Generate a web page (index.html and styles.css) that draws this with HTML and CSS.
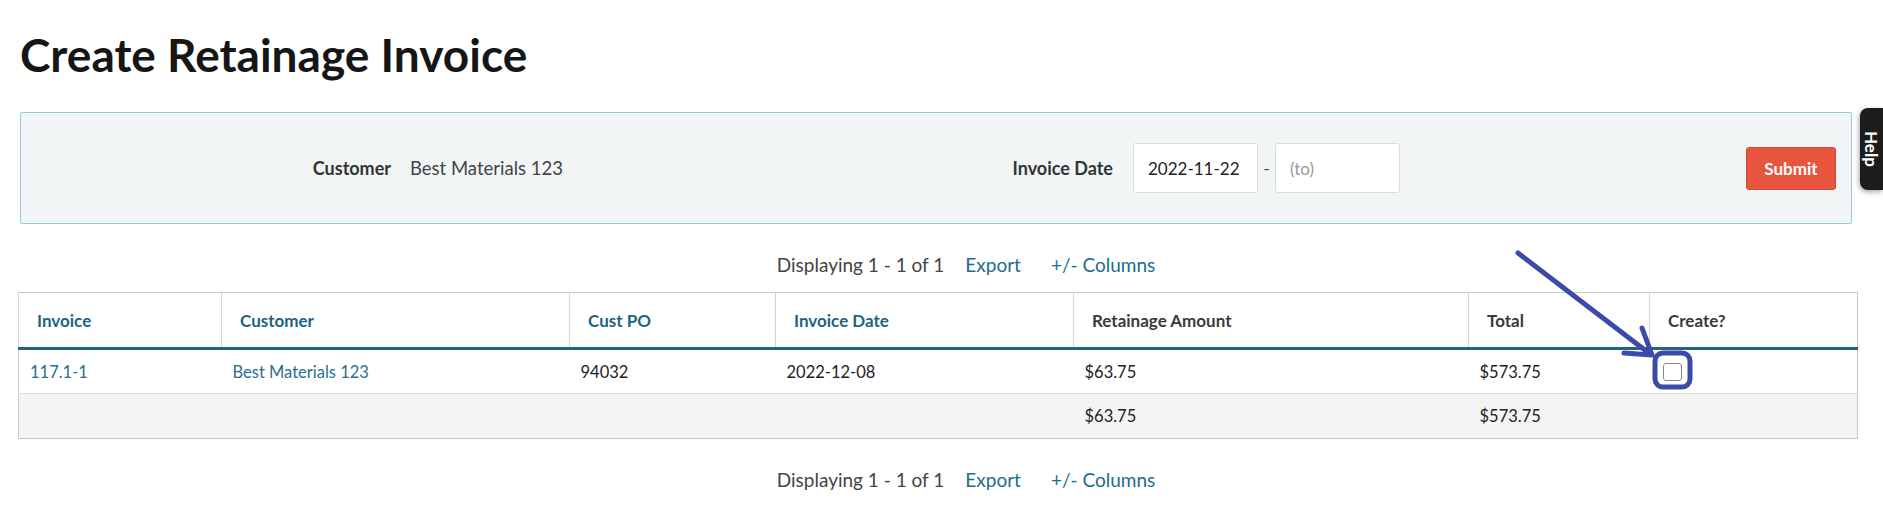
FILE: index.html
```html
<!DOCTYPE html>
<html lang="en">
<head>
    <meta charset="UTF-8">
    <meta name="viewport" content="width=device-width, initial-scale=1.0">
    <title>Create Retainage Invoice</title>
    <link rel="stylesheet" href="styles.css">
</head>
<body>
    <div class="page">
        <h1>Create Retainage Invoice</h1>

        <form class="filter">
            <label class="filter-label">Customer</label>
            <span class="filter-value">Best Materials 123</span>
            <label class="filter-label" for="dateFrom">Invoice Date</label>
            <div class="date-range">
                <input type="text" id="dateFrom" value="2022-11-22">
                <span class="dash">-</span>
                <input type="text" id="dateTo" placeholder="(to)">
            </div>
            <span></span>
            <button type="submit">Submit</button>
        </form>

        <div class="pager">
            <span>Displaying 1 - 1 of 1</span>
            <a href="#">Export</a>
            <a href="#">+/- Columns</a>
        </div>

        <table class="grid">
            <thead>
                <tr>
                    <th class="c-invoice"><a href="#">Invoice</a></th>
                    <th class="c-customer"><a href="#">Customer</a></th>
                    <th class="c-po"><a href="#">Cust PO</a></th>
                    <th class="c-date"><a href="#">Invoice Date</a></th>
                    <th class="c-ret">Retainage Amount</th>
                    <th class="c-total">Total</th>
                    <th class="c-create">Create?</th>
                </tr>
            </thead>
            <tbody>
                <tr>
                    <td><a href="#">117.1-1</a></td>
                    <td><a href="#">Best Materials 123</a></td>
                    <td>94032</td>
                    <td>2022-12-08</td>
                    <td>$63.75</td>
                    <td>$573.75</td>
                    <td><input type="checkbox" class="check"></td>
                </tr>
                <tr class="totals">
                    <td></td>
                    <td></td>
                    <td></td>
                    <td></td>
                    <td>$63.75</td>
                    <td>$573.75</td>
                    <td></td>
                </tr>
            </tbody>
        </table>

        <div class="pager pager-bottom">
            <span>Displaying 1 - 1 of 1</span>
            <a href="#">Export</a>
            <a href="#">+/- Columns</a>
        </div>
    </div>

    <div class="help-tab">Help</div>

    <!-- annotation drawn over the screenshot -->
    <svg class="annotation" width="1883" height="516" viewBox="0 0 1883 516">
        <g fill="none" stroke="#3c4aa8" stroke-width="5" stroke-linecap="round" stroke-linejoin="round">
            <line x1="1518" y1="253" x2="1650" y2="354"/>
            <polyline points="1642,328 1652,355 1624,353"/>
            <rect x="1655" y="353" width="35" height="34" rx="8"/>
        </g>
    </svg>
</body>
</html>
```

FILE: styles.css
```css
* {
    box-sizing: border-box;
    margin: 0;
    padding: 0;
}

body {
    font-family: 'Lato', 'Liberation Sans', sans-serif;
    color: #333;
    background: #fff;
    width: 1883px;
    height: 516px;
    overflow: hidden;
    position: relative;
}

a {
    color: #226c8e;
    text-decoration: none;
}

.page {
    padding: 0 25px 0 18px;
}

h1 {
    font-size: 46px;
    line-height: 60px;
    font-weight: 700;
    color: #161616;
    margin-top: 25px;
    margin-left: 2px;
}

/* filter box */
.filter {
    display: grid;
    grid-template-columns: 370px 460px 262px auto 1fr auto;
    align-items: center;
    height: 112px;
    margin: 27px 6px 0 2px;
    padding-right: 15px;
    background: #f1f5f6;
    border: 1px solid #93cbd3;
    border-radius: 2px;
    font-size: 18px;
}

.filter-label {
    text-align: right;
    font-weight: 700;
    color: #333;
}

.filter-value {
    padding-left: 19px;
    font-size: 18.5px;
    color: #444;
}

.date-range {
    display: flex;
    align-items: center;
    margin-left: 20px;
}

.date-range input {
    width: 125px;
    height: 50px;
    padding: 0 14px;
    border: 1px solid #dcdcdc;
    border-radius: 3px;
    background: #fff;
    font-family: inherit;
    font-size: 17px;
    color: #222;
}

.date-range input::placeholder {
    color: #999;
}

.dash {
    width: 17px;
    text-align: center;
    color: #555;
}

.filter button {
    width: 90px;
    height: 43px;
    background: #e8553f;
    color: #fff;
    border: 1px solid #d04a36;
    border-radius: 3px;
    font-family: inherit;
    font-size: 17px;
    font-weight: 700;
}

/* pager */
.pager {
    display: flex;
    justify-content: center;
    gap: 21px;
    line-height: 24px;
    font-size: 19px;
    margin: 29px 0 15px 56px;
    color: #444;
}

.pager a + a {
    margin-left: 9px;
}

.pager-bottom {
    margin-top: 29px;
}

/* table */
.grid {
    width: 100%;
    border-collapse: collapse;
    border: 1px solid #c9c9c9;
    font-size: 16.5px;
}

.grid th {
    height: 56px;
    padding: 0 18px;
    text-align: left;
    font-size: 17px;
    font-weight: 700;
    color: #3a3a3a;
    border-left: 1px solid #d4d4d4;
    border-bottom: 3px solid #1f6486;
}

.grid th a {
    color: #1e6283;
}

.c-invoice { width: 203px; }
.c-customer { width: 348px; }
.c-po { width: 206px; }
.c-date { width: 298px; }
.c-ret { width: 395px; }
.c-total { width: 181px; }

.grid td {
    height: 45px;
    padding: 0 11px;
    border-top: 1px solid #dcdcdc;
    color: #222;
}

.grid td a {
    color: #2a6f91;
}

.grid tr.totals td {
    background: #f4f4f4;
}

.check {
    appearance: none;
    display: block;
    width: 19px;
    height: 18px;
    margin-left: 2px;
    border: 1px solid #8a8a8a;
    border-radius: 3px;
    background: #fff;
}

/* help tab on the right edge */
.help-tab {
    position: absolute;
    right: 0;
    top: 108px;
    width: 23px;
    height: 82px;
    background: #1c1c1c;
    border-radius: 8px 0 0 8px;
    box-shadow: -1px 2px 5px rgba(0, 0, 0, 0.35);
    color: #fff;
    font-weight: 700;
    font-size: 17px;
    writing-mode: vertical-rl;
    display: flex;
    align-items: center;
    justify-content: center;
}

.annotation {
    position: absolute;
    left: 0;
    top: 0;
    pointer-events: none;
}
```
